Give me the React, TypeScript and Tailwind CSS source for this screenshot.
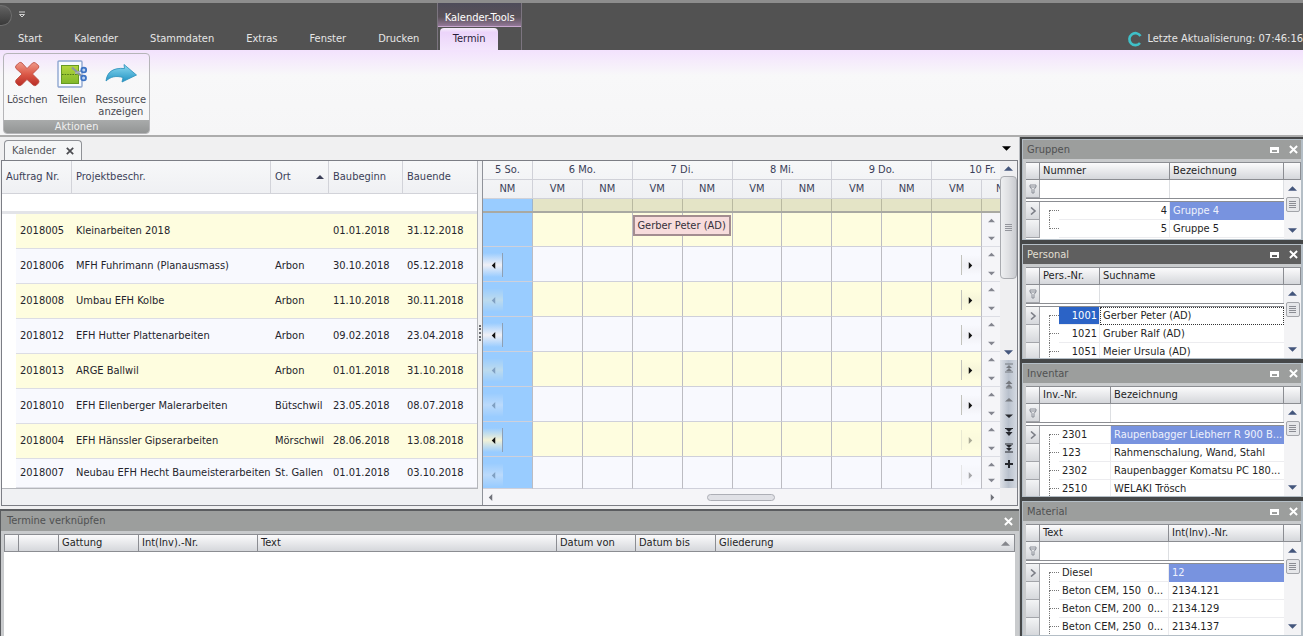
import type { ReactNode } from "react"
import clsx from "clsx"

const menu = ["Start", "Kalender", "Stammdaten", "Extras", "Fenster", "Drucken"]

const projects = [
  { nr: "2018005", name: "Kleinarbeiten 2018", ort: "", start: "01.01.2018", end: "31.12.2018", prev: "none", next: "none" },
  { nr: "2018006", name: "MFH Fuhrimann (Planausmass)", ort: "Arbon", start: "30.10.2018", end: "05.12.2018", prev: "on", next: "on" },
  { nr: "2018008", name: "Umbau EFH Kolbe", ort: "Arbon", start: "11.10.2018", end: "30.11.2018", prev: "off", next: "on" },
  { nr: "2018012", name: "EFH Hutter Plattenarbeiten", ort: "Arbon", start: "09.02.2018", end: "23.04.2018", prev: "on", next: "on" },
  { nr: "2018013", name: "ARGE Ballwil", ort: "Arbon", start: "01.01.2018", end: "31.10.2018", prev: "off", next: "on" },
  { nr: "2018010", name: "EFH Ellenberger Malerarbeiten", ort: "Bütschwil", start: "23.05.2018", end: "08.07.2018", prev: "off", next: "on" },
  { nr: "2018004", name: "EFH Hänssler Gipserarbeiten", ort: "Mörschwil", start: "28.06.2018", end: "13.08.2018", prev: "on", next: "off" },
  { nr: "2018007", name: "Neubau EFH Hecht Baumeisterarbeiten", ort: "St. Gallen", start: "01.01.2018", end: "03.10.2018", prev: "off", next: "off" },
]

const halves = ["NM", "VM", "NM", "VM", "NM", "VM", "NM", "VM", "NM", "VM"]

const timelineGrid = "grid grid-cols-[repeat(10,minmax(0,1fr))_18px]"

type Dir = "up" | "down" | "left" | "right"

const arrows: Record<Dir, string> = {
  up: "M0 6 L4 2 L8 6Z",
  down: "M0 2 L4 6 L8 2Z",
  left: "M6 0 L2 4 L6 8Z",
  right: "M2 0 L6 4 L2 8Z",
}

function Arrow({ dir, className }: { dir: Dir; className?: string }) {
  return (
    <svg viewBox="0 0 8 8" className={clsx("shrink-0 fill-current", className)} aria-hidden="true">
      <path d={arrows[dir]} />
    </svg>
  )
}

function CloseIcon({ className }: { className?: string }) {
  return (
    <svg viewBox="0 0 10 10" className={className} fill="none" stroke="currentColor" strokeWidth="2.2" aria-hidden="true">
      <path d="M1 1.2 L9 8.8 M9 1.2 L1 8.8" />
    </svg>
  )
}

/* Ribbon icons */

function DeleteIcon() {
  return (
    <svg viewBox="0 0 32 32" className="size-8" aria-hidden="true">
      <defs>
        <linearGradient id="del" x1="0" y1="0" x2="0" y2="1">
          <stop offset="0" stopColor="#ef9a8a" />
          <stop offset="0.5" stopColor="#dc5a48" />
          <stop offset="1" stopColor="#b92c25" />
        </linearGradient>
      </defs>
      <path
        d="M5 7.5 L8.5 4.5 Q10 4 11 5 L16 10.5 L21.5 5 Q23 4 24.5 5 L27.5 7.5 Q28.5 9 27 10.5 L21.5 16 L27.5 22 Q28.5 23.5 27.5 25 L25 27.5 Q23.5 28 22 27 L16 21.5 L10.5 27 Q9 28 7.5 27.5 L5 25 Q4 23.5 5 22 L11 16 L5 10.5 Q4 9 5 7.5Z"
        fill="url(#del)"
        stroke="#b9473c"
        strokeWidth="0.8"
      />
    </svg>
  )
}

function SplitIcon() {
  return (
    <svg viewBox="0 0 32 32" className="size-8" aria-hidden="true">
      <defs>
        <linearGradient id="split" x1="0" y1="0" x2="0" y2="1">
          <stop offset="0" stopColor="#b4d63c" />
          <stop offset="1" stopColor="#82b82a" />
        </linearGradient>
      </defs>
      <rect x="2" y="3" width="24" height="26" rx="1" fill="#f7fafe" stroke="#8fa6d0" strokeWidth="1.4" />
      <rect x="5.5" y="7.5" width="17" height="18" fill="url(#split)" stroke="#679a22" />
      <path d="M6 16.5 H22" stroke="#4f7a18" strokeWidth="1.2" strokeDasharray="1.6 1" />
      <path d="M16 9.500 L26 18.5" stroke="#8b95a5" strokeWidth="2.2" />
      <path d="M19 15.500 L26 12.5" stroke="#a4adba" strokeWidth="1.8" />
      <circle cx="27.8" cy="12" r="2.4" fill="#bcd4f2" stroke="#3f74c4" strokeWidth="1.8" />
      <circle cx="27.6" cy="20" r="2.4" fill="#bcd4f2" stroke="#3f74c4" strokeWidth="1.8" />
    </svg>
  )
}

function ShareIcon() {
  return (
    <svg viewBox="0 0 32 32" className="size-8" aria-hidden="true">
      <defs>
        <linearGradient id="share" x1="0" y1="0" x2="0" y2="1">
          <stop offset="0" stopColor="#8ddaf0" />
          <stop offset="1" stopColor="#2193c4" />
        </linearGradient>
      </defs>
      <path
        d="M1 23 C2 14 8 9.500 19.500 10.500 L19 6.500 L31.500 17 L17 24 L18 19.500 C11 17.500 6 18.500 1 23Z"
        fill="url(#share)"
        stroke="#2c8fba"
        strokeWidth="0.8"
      />
    </svg>
  )
}

function RibbonButton({ icon, children }: { icon: ReactNode; children: ReactNode }) {
  return (
    <button className="flex flex-col items-center px-[2px] text-center leading-3 text-[#4a4a52]">
      {icon}
      <span className="mt-1">{children}</span>
    </button>
  )
}

function Header() {
  return (
    <header className="flex h-[50px] shrink-0 border-t-[3px] border-[#8d8d8d] bg-[#525252] text-[#e6e6e6]">
      <div className="flex flex-col justify-between">
        <div className="flex h-6 items-center">
          <button aria-label="Menü" className="h-[21px] w-3 rounded-r-full border border-l-0 border-[#6e6e6e] bg-linear-to-b from-[#626262] to-[#3a3a3a]" />
          <button aria-label="Schnellzugriff anpassen" className="ml-[6px] text-[#d0d0d0]">
            <svg viewBox="0 0 8 8" className="size-2" fill="none" stroke="currentColor" aria-hidden="true">
              <path d="M1 1 H7 M1.500 3.500 H6.500 L4 6Z" />
            </svg>
          </button>
        </div>
        <nav className="flex h-[22px] px-[2px]">
          {menu.map((item) => (
            <a key={item} href="#" className="px-4 leading-[22px]">
              {item}
            </a>
          ))}
        </nav>
      </div>
      <div className="flex w-[85px] flex-col border-x border-[#7c7580]">
        <div className="h-[24px] border-b border-[#c9a8cf] bg-linear-to-b from-[#4e4c5a] via-[#595158] via-60% to-[#937898] pt-[5px] text-center leading-5 text-white">
          Kalender-Tools
        </div>
        <a href="#" className="ml-[2px] mt-px block w-[58px] flex-1 rounded-t bg-linear-to-b from-[#f6eefb] via-[#ecd4fa] via-20% to-[#f3e6fc] text-center leading-[22px] text-[#2a1d3a]">
          Termin
        </a>
      </div>
      <div className="ml-auto flex items-center gap-1 self-end pb-[3px] leading-4">
        <svg viewBox="0 0 16 16" className="size-4" fill="none" stroke="#3fc0c8" strokeWidth="2.600" aria-hidden="true">
          <path d="M13.500 5 A6 6 0 1 0 13 12" />
        </svg>
        <span>Letzte Aktualisierung: 07:46:16</span>
      </div>
    </header>
  )
}

function Ribbon() {
  return (
    <section className="flex h-[87px] shrink-0 border-b-2 border-[#adadad] bg-linear-to-b from-[#f3e2fd] via-[#f8f8f9] via-30% to-[#f6f6f7] px-[3px] pb-px pt-[3px]">
      <div className="flex flex-col overflow-hidden rounded-sm border border-[#b5b5b8]">
        <div className="flex flex-1 items-start gap-1 px-px pt-1">
          <RibbonButton icon={<DeleteIcon />}>Löschen</RibbonButton>
          <RibbonButton icon={<SplitIcon />}>Teilen</RibbonButton>
          <RibbonButton icon={<ShareIcon />}>
            Ressource
            <br />
            anzeigen
          </RibbonButton>
        </div>
        <div className="bg-linear-to-b from-[#a9abab] to-[#939595] text-center leading-[13px] text-[#f0f0f0]">Aktionen</div>
      </div>
    </section>
  )
}

function ProjectTable() {
  const th = "border-b border-r border-[#d2d3d9] text-left font-normal"
  return (
    <div className="w-[476px] shrink-0 bg-[#f0f1f3]">
      <table className="w-full table-fixed border-separate border-spacing-0 border-b border-r border-[#b4b6bb] bg-white">
        <colgroup>
          <col className="w-[14px]" />
          <col className="w-[56px]" />
          <col className="w-[199px]" />
          <col className="w-[58px]" />
          <col className="w-[74px]" />
          <col />
        </colgroup>
        <thead>
          <tr className="h-[33px] bg-linear-to-b from-[#f7f8f9] to-[#eff0f3] text-[#3b3f58]">
            <th colSpan={2} className={clsx(th, "pl-1")}>Auftrag Nr.</th>
            <th className={clsx(th, "pl-1")}>Projektbeschr.</th>
            <th className={clsx(th, "px-1")}>
              <span className="flex items-center justify-between">
                Ort <Arrow dir="up" className="size-2" />
              </span>
            </th>
            <th className={clsx(th, "pl-1")}>Baubeginn</th>
            <th className="border-b border-[#d2d3d9] pl-1 text-left font-normal">Bauende</th>
          </tr>
          <tr className="h-5">
            <td colSpan={6} className="border-b-[3px] border-[#e3e4e8]" />
          </tr>
        </thead>
        <tbody className="text-[#24242c]">
          {projects.map((p, i) => {
            const cell = clsx("whitespace-nowrap border-b border-[#dcdde4] pl-1", i % 2 ? "bg-[#f8f9fe]" : "bg-[#fefddf]")
            return (
              <tr key={p.nr} className={i === projects.length - 1 ? "h-[29px]" : "h-[35px]"}>
                <td />
                <td className={cell}>{p.nr}</td>
                <td className={cell}>{p.name}</td>
                <td className={cell}>{p.ort}</td>
                <td className={cell}>{p.start}</td>
                <td className={cell}>{p.end}</td>
              </tr>
            )
          })}
        </tbody>
      </table>
    </div>
  )
}

function Timeline() {
  const head = "flex h-full items-center justify-center border-b border-r border-[#d0d1d8]"
  return (
    <div className="flex min-w-0 flex-1 flex-col border-l border-[#8f9299]">
      <div className="bg-linear-to-b from-[#f7f8f9] to-[#eff0f3] text-[#3b3f58]">
        <div className={clsx(timelineGrid, "h-[19px]")}>
          <div className={head}>5 So.</div>
          {["6 Mo.", "7 Di.", "8 Mi.", "9 Do."].map((d) => (
            <div key={d} className={clsx(head, "col-span-2")}>{d}</div>
          ))}
          <div className="col-span-2 flex items-center justify-end border-b border-[#d0d1d8] pr-1">10 Fr.</div>
        </div>
        <div className={clsx(timelineGrid, "h-[19px]")}>
          {halves.map((h, i) => (
            <div key={i} className={head}>{h}</div>
          ))}
          <div className="flex items-center overflow-hidden border-b border-[#d0d1d8] pl-[14px]">NM</div>
        </div>
      </div>
      <div className={clsx(timelineGrid, "h-[14px] border-b-2 border-[#a9a9a2]")}>
        {halves.map((_, i) => (
          <div key={i} className={clsx("border-r", i === 0 ? "border-[#9db4cc] bg-[#99ccff]" : "border-[#b9b9a0] bg-[#e4e4c6]")} />
        ))}
        <div className="bg-[#e4e4c6]" />
      </div>
      {projects.map((p, i) => {
        const alt = i % 2 === 1
        return (
          <div
            key={p.nr}
            className={clsx(timelineGrid, i === 0 ? "h-[34px]" : i === projects.length - 1 ? "h-8" : "h-[35px]")}
          >
            {halves.map((_, c) => (
              <div
                key={c}
                className={clsx(
                  "relative border-b border-r border-b-[#cfd0da] border-r-[#bcbcc2]",
                  c === 0 ? "bg-[#99ccff]" : alt ? "bg-[#f8f9fe]" : "bg-[#fefddf]"
                )}
              >
                {c === 0 && p.prev !== "none" && (
                  <button
                    aria-label="Vorheriger Termin"
                    className={clsx(
                      "absolute left-0 top-[6px] flex h-6 w-5 items-center bg-linear-to-b from-transparent to-transparent pl-[7px]",
                      alt ? "via-[#f0f0f6]" : "via-[#f3f2d6]",
                      p.prev === "off" ? "text-[#5c6068] opacity-40" : "border-r border-[#8fa0b4] text-[#111]"
                    )}
                  >
                    <Arrow dir="left" className="size-[7px]" />
                  </button>
                )}
                {c === 9 && p.next !== "none" && (
                  <button
                    aria-label="Nächster Termin"
                    className={clsx(
                      "absolute right-0 top-2 flex h-5 w-5 items-center border-l border-[#c2c2bc] bg-linear-to-b from-transparent to-transparent pl-[5px] text-[#111]",
                      alt ? "via-[#f0f0f5]" : "via-[#f6f5da]",
                      p.next === "off" && "opacity-35"
                    )}
                  >
                    <Arrow dir="right" className="size-[7px]" />
                  </button>
                )}
                {i === 0 && c === 3 && (
                  <button className="absolute left-0 top-[2px] z-10 h-[21px] w-[200%] truncate border-2 border-[#a38d90] bg-[#f7dcdc] text-center leading-4 text-[#35303a]">
                    Gerber Peter (AD)
                  </button>
                )}
              </div>
            ))}
            <div className="flex flex-col items-center justify-between border-b border-[#dcdde4] bg-[#f5f5f8] py-1 text-[#84868f]">
              <button aria-label="Nach oben"><Arrow dir="up" className="size-[7px]" /></button>
              <button aria-label="Nach unten"><Arrow dir="down" className="size-[7px]" /></button>
            </div>
          </div>
        )
      })}
      <div className="flex flex-1 items-center justify-between bg-[#f5f5f8] px-1 text-[#70727a]">
        <button aria-label="Nach links"><Arrow dir="left" className="size-[7px]" /></button>
        <div className="flex flex-1">
          <div className="w-[43%]" />
          <div className="h-[7px] w-[68px] rounded-full border border-[#adafb6] bg-[#e0e1e6]" />
        </div>
        <button aria-label="Nach rechts"><Arrow dir="right" className="size-[7px]" /></button>
      </div>
    </div>
  )
}

const scaleButtons = [
  { label: "Erster", fill: "M2 5 L5 2 L8 5Z M2 8 L5 5 L8 8Z", line: "M1 1 H9 M1 9 H9", dim: true },
  { label: "Seite zurück", fill: "M1.500 5 L5 1.500 L8.500 5Z M1.500 8.500 L5 5 L8.500 8.500Z", line: "M2 9 H8", dim: true },
  { label: "Zurück", fill: "M1 6.500 L5 3 L9 6.500Z", line: "", dim: true },
  { label: "Weiter", fill: "M1 3.500 L5 7 L9 3.500Z", line: "", dim: false },
  { label: "Seite vor", fill: "M2 2 H8 L5 5Z M1.500 5 L5 9 L8.500 5Z", line: "M1 1.500 H9", dim: false },
  { label: "Letzter", fill: "M2 2 H8 L5 5Z M2 5 H8 L5 8Z", line: "M1 1 H9 M1 9 H9", dim: false },
  { label: "Vergrössern", fill: "M1 4 H4 V1 H6 V4 H9 V6 H6 V9 H4 V6 H1Z", line: "", dim: false },
  { label: "Verkleinern", fill: "M0.500 4 H9.500 V6 H0.500Z", line: "", dim: false },
]

function TimelineScrollbar() {
  return (
    <div className="flex w-[17px] shrink-0 flex-col bg-[#efeff1]">
      <button aria-label="Nach oben" className="flex h-[15px] items-center justify-center text-[#44567c]">
        <Arrow dir="up" className="size-[9px]" />
      </button>
      <div className="flex h-[103px] flex-col items-center justify-center gap-px rounded-sm border border-[#a9abb0] bg-linear-to-r from-[#eeeff1] via-[#dfe0e3] to-[#c9cbd0]">
        <span className="h-px w-[7px] bg-[#93959c]" />
        <span className="h-px w-[7px] bg-[#93959c]" />
        <span className="h-px w-[7px] bg-[#93959c]" />
        <span className="h-px w-[7px] bg-[#93959c]" />
      </div>
      <div className="h-[66px]" />
      <button aria-label="Nach unten" className="flex h-[15px] items-center justify-center text-[#44567c]">
        <Arrow dir="down" className="size-[9px]" />
      </button>
      <div className="flex flex-col bg-linear-to-r from-[#dfe2e8] via-[#b9c1cd] to-[#d5dae2]">
        {scaleButtons.map((b) => (
          <button key={b.label} aria-label={b.label} className={clsx("flex h-4 items-center justify-center", b.dim ? "text-[#777a80]" : "text-[#26282e]")}>
            <svg viewBox="0 0 10 10" className="size-[10px]" aria-hidden="true">
              <path d={b.fill} fill="currentColor" />
              <path d={b.line} fill="none" stroke="currentColor" />
            </svg>
          </button>
        ))}
      </div>
    </div>
  )
}

function Calendar() {
  return (
    <section className="shrink-0 bg-[#f0f0f1] pb-[3px] pt-[3px]">
      <div className="flex h-5 items-start justify-between pl-1 pr-2">
        <div className="relative z-10 -mb-px flex h-5 items-center gap-[10px] rounded-t-sm border border-b-0 border-[#8f9196] bg-[#f5f6f7] px-[7px] text-[#55565c]">
          <span>Kalender</span>
          <button aria-label="Schliessen" className="text-[#4c4d52]"><CloseIcon className="size-2" /></button>
        </div>
        <button aria-label="Fenster auswählen" className="pt-1 text-black"><Arrow dir="down" className="size-[9px]" /></button>
      </div>
      <div className="mx-px flex h-[346px] border border-[#7c7e85] bg-[#f0f1f3]">
        <ProjectTable />
        <div className="flex w-1 shrink-0 items-center justify-center">
          <span className="h-4 border-l-2 border-dotted border-[#6a6c72]" />
        </div>
        <Timeline />
        <TimelineScrollbar />
      </div>
    </section>
  )
}

const linkColumns = [
  { label: "", width: "w-[14px]" },
  { label: "", width: "w-[40px]" },
  { label: "Gattung", width: "w-[80px]" },
  { label: "Int(Inv).-Nr.", width: "w-[119px]" },
  { label: "Text", width: "w-[299px]" },
  { label: "Datum von", width: "w-[79px]" },
  { label: "Datum bis", width: "w-[80px]" },
  { label: "Gliederung", width: "" },
]

const gridHead = "border-b border-r border-[#8b8d92] bg-linear-to-b from-[#fbfbfc] to-[#d5d7db] pl-[3px] text-left font-normal text-[#1f1f25]"

function LinkPanel() {
  return (
    <section className="flex min-h-0 flex-1 flex-col border-l border-t-2 border-[#5a5c5f] bg-[#c9cbcd]">
      <div className="flex h-5 items-center justify-between bg-[#9c9e9d] px-[6px] text-[#505152]">
        <span>Termine verknüpfen</span>
        <button aria-label="Schliessen" className="text-white"><CloseIcon className="size-[9px]" /></button>
      </div>
      <div className="ml-[3px] mr-1 mt-[3px] flex-1 bg-white">
        <table className="w-full table-fixed border-separate border-spacing-0 border-l border-t border-[#8b8d92]">
          <colgroup>
            {linkColumns.map((c, i) => (
              <col key={i} className={c.width} />
            ))}
          </colgroup>
          <thead>
            <tr className="h-[17px]">
              {linkColumns.map((c, i) => (
                <th key={i} className={gridHead}>
                  {c.label === "Gliederung" ? (
                    <span className="flex items-center justify-between pr-1">
                      {c.label}
                      <Arrow dir="up" className="size-[9px] text-[#85878d]" />
                    </span>
                  ) : (
                    c.label
                  )}
                </th>
              ))}
            </tr>
          </thead>
        </table>
      </div>
    </section>
  )
}

type PanelProps = {
  title: string
  active?: boolean
  columns: [string, string]
  firstWidth: string
  rows: [string, string][]
  numeric?: boolean
  height: string
  complete?: boolean
}

function GridPanel({ title, active, columns, firstWidth, rows, numeric, height, complete }: PanelProps) {
  const marker = "border-b border-r border-[#a3a5aa] bg-linear-to-b from-[#f3f4f5] to-[#d6d8dc]"
  return (
    <section className={clsx("flex flex-col overflow-hidden border border-r-2 border-[#b4bec6] bg-[#c9cbcd]", height)}>
      <div
        className={clsx(
          "flex h-[19px] shrink-0 items-center justify-between pl-1 pr-[3px]",
          active ? "bg-[#5f5f5f] text-[#e2dfd2]" : "bg-[#9c9e9d] text-[#505152]"
        )}
      >
        <span>{title}</span>
        <span className="flex items-center gap-[10px] text-white">
          <button aria-label="Minimieren" className="block h-[6px] w-[9px] border-x-2 border-b border-t-[3px] border-white" />
          <button aria-label="Schliessen"><CloseIcon className="size-[9px]" /></button>
        </span>
      </div>
      <div className="ml-[3px] mt-[3px] flex min-h-0 flex-1 overflow-hidden bg-white">
        <div className="min-w-0 flex-1">
          <table className="w-full table-fixed border-separate border-spacing-0">
            <colgroup>
              <col className="w-[14px]" />
              <col className="w-[19px]" />
              <col className={firstWidth} />
              <col />
            </colgroup>
            <thead>
              <tr className="h-[18px]">
                <th className={clsx(gridHead, "border-t")} />
                <th colSpan={2} className={clsx(gridHead, "border-t")}>{columns[0]}</th>
                <th className={clsx(gridHead, "border-t")}>{columns[1]}</th>
              </tr>
              <tr className="h-[18px]">
                <td className={marker}>
                  <svg viewBox="0 0 8 10" className="mx-auto h-[10px] w-2" fill="none" stroke="#8b8f98" aria-hidden="true">
                    <path d="M1 1 H7 V3 L5 5.500 V9 H3 V5.500 L1 3Z M1 3 H7" />
                  </svg>
                </td>
                <td colSpan={2} className="border-r border-[#dddfe2]">
                  <input aria-label={`${columns[0]} filtern`} className="block h-4 w-full px-1 outline-none" />
                </td>
                <td className="border-r border-[#dddfe2]">
                  <input aria-label={`${columns[1]} filtern`} className="block h-4 w-full px-1 outline-none" />
                </td>
              </tr>
              <tr className="h-1">
                <td colSpan={4} className="h-1 border-y border-[#8b8d92]" />
              </tr>
            </thead>
            <tbody className="text-[#1f1f25]">
              {rows.map(([a, b], i) => (
                <tr key={a + b} className="h-[18px]">
                  <td className={clsx(marker, "text-[#7b7e86]")}>
                    {i === 0 && (
                      <svg viewBox="0 0 8 8" className="mx-auto size-2" fill="none" stroke="currentColor" strokeWidth="1.600" aria-hidden="true">
                        <path d="M2 0.500 L6 4 L2 7.500" />
                      </svg>
                    )}
                  </td>
                  <td>
                    <div className={clsx("ml-[9px] h-[9px] border-b border-dotted border-[#777]", i > 0 && "border-l")} />
                    <div className={clsx("ml-[9px] h-[9px] border-dotted border-[#777]", !(complete && i === rows.length - 1) && "border-l")} />
                  </td>
                  <td
                    className={clsx(
                      "truncate whitespace-pre border-b border-r border-[#ececef] pl-[3px] pr-[2px]",
                      numeric && "text-right",
                      active && i === 0 && "bg-[#2b63c6] text-white"
                    )}
                  >
                    {a}
                  </td>
                  <td
                    className={clsx(
                      "truncate whitespace-pre",
                      i === 0 && active ? "pl-[2px]" : "pl-[3px]",
                      i > 0 && "border-b border-[#ececef]",
                      i === 0 && active && "border border-dotted border-[#333]",
                      i === 0 && !active && "bg-[#7893df] text-[#eef1fc]"
                    )}
                  >
                    {b}
                  </td>
                </tr>
              ))}
            </tbody>
          </table>
        </div>
        <div className="flex w-[17px] shrink-0 flex-col items-center bg-[#f3f3f5] text-[#44567c]">
          <div className="h-[18px] w-full shrink-0 border-y border-r border-[#8b8d92] bg-linear-to-b from-[#fbfbfc] to-[#d5d7db]" />
          <button aria-label="Nach oben" className="mt-[2px] flex h-3 shrink-0 items-center"><Arrow dir="up" className="size-[9px]" /></button>
          <div className="mt-[3px] flex h-[15px] w-[14px] shrink-0 flex-col items-center justify-center gap-px rounded-xs border border-[#a3a5aa] bg-[#e6e7ea]">
            <span className="h-px w-[7px] bg-[#8b8d94]" />
            <span className="h-px w-[7px] bg-[#8b8d94]" />
            <span className="h-px w-[7px] bg-[#8b8d94]" />
            <span className="h-px w-[7px] bg-[#8b8d94]" />
          </div>
          <button aria-label="Nach unten" className="mb-1 mt-auto"><Arrow dir="down" className="size-[9px]" /></button>
        </div>
      </div>
    </section>
  )
}

export default function App() {
  return (
    <div className="flex h-screen flex-col overflow-hidden bg-[#f0f0f1] font-['DejaVu_Sans_Condensed','DejaVu_Sans',sans-serif] text-[11px] leading-[14px]">
      <Header />
      <Ribbon />
      <main className="flex min-h-0 flex-1">
        <div className="flex min-w-0 flex-1 flex-col">
          <Calendar />
          <LinkPanel />
        </div>
        <aside className="flex w-[284px] shrink-0 flex-col gap-1 border-l border-[#b9bcc0] bg-[#454748] pl-[2px] pt-[2px]">
          <GridPanel
            title="Gruppen"
            columns={["Nummer", "Bezeichnung"]}
            firstWidth="w-[111px]"
            rows={[["4", "Gruppe 4"], ["5", "Gruppe 5"]]}
            numeric
            complete
            height="h-[101px] shrink-0"
          />
          <GridPanel
            title="Personal"
            active
            columns={["Pers.-Nr.", "Suchname"]}
            firstWidth="w-[41px]"
            rows={[["1001", "Gerber Peter (AD)"], ["1021", "Gruber Ralf (AD)"], ["1051", "Meier Ursula (AD)"]]}
            numeric
            height="h-[115px] shrink-0"
          />
          <GridPanel
            title="Inventar"
            columns={["Inv.-Nr.", "Bezeichnung"]}
            firstWidth="w-[52px]"
            rows={[
              ["2301", "Raupenbagger Liebherr R 900 B..."],
              ["123", "Rahmenschalung, Wand, Stahl"],
              ["2302", "Raupenbagger Komatsu PC 180..."],
              ["2510", "WELAKI Trösch"],
            ]}
            height="h-[134px] shrink-0"
          />
          <GridPanel
            title="Material"
            columns={["Text", "Int(Inv).-Nr."]}
            firstWidth="w-[110px]"
            rows={[
              ["Diesel", "12"],
              ["Beton CEM, 150  0...", "2134.121"],
              ["Beton CEM, 200  0...", "2134.129"],
              ["Beton CEM, 250  0...", "2134.137"],
            ]}
            height="min-h-0 flex-1"
          />
        </aside>
      </main>
    </div>
  )
}
